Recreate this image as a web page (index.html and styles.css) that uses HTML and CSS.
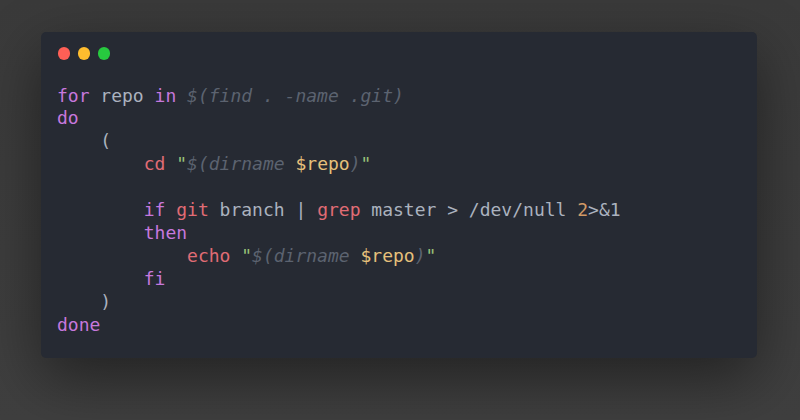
FILE: index.html
```html
<!DOCTYPE html>
<html>
<head>
<meta charset="utf-8">
<link rel="stylesheet" href="styles.css">
</head>
<body>
<div class="window">
  <div class="controls">
    <span class="dot red"></span>
    <span class="dot yellow"></span>
    <span class="dot green"></span>
  </div>
<pre class="code"><span class="kw">for</span> repo <span class="kw">in</span> <span class="sub">$(find . -name .git)</span>
<span class="kw">do</span>
    (
        <span class="cmd">cd</span> <span class="str">"</span><span class="sub">$(dirname </span><span class="var">$repo</span><span class="sub">)</span><span class="str">"</span>

        <span class="kw">if</span> <span class="cmd">git</span> branch | <span class="cmd">grep</span> master &gt; /dev/null <span class="num">2</span>&gt;&amp;1
        <span class="kw">then</span>
            <span class="cmd">echo</span> <span class="str">"</span><span class="sub">$(dirname </span><span class="var">$repo</span><span class="sub">)</span><span class="str">"</span>
        <span class="kw">fi</span>
    )
<span class="kw">done</span></pre>
</div>
</body>
</html>
```

FILE: styles.css
```css
html, body {
  margin: 0;
  height: 100%;
}
body {
  background: linear-gradient(180deg, #3a3a3a 0%, #3f3f3f 100%);
  padding: 32px 0 0 41px;
  box-sizing: border-box;
}
.window {
  width: 716px;
  height: 326px;
  box-sizing: border-box;
  background: #262a33;
  border-radius: 5px;
  box-shadow: 0 20px 60px rgba(0, 0, 0, 0.45);
  padding: 15px 16px 0 16px;
}
.controls {
  display: flex;
  gap: 7.5px;
  height: 12.5px;
  padding-left: 0.5px;
}
.dot {
  width: 12.5px;
  height: 12.5px;
  border-radius: 50%;
  display: block;
}
.red { background: #ff5f56; }
.yellow { background: #ffbd2e; }
.green { background: #27c93f; }
.code {
  margin: 25px 0 0 0;
  font-family: "DejaVu Sans Mono", monospace;
  font-size: 18px;
  line-height: 22.9px;
  color: #abb2bf;
}
.kw { color: #c678dd; }
.cmd { color: #e06c75; }
.sub { color: #5c6370; font-style: italic; }
.str { color: #98c379; }
.var { color: #e5c07b; }
.num { color: #d19a66; }
```
